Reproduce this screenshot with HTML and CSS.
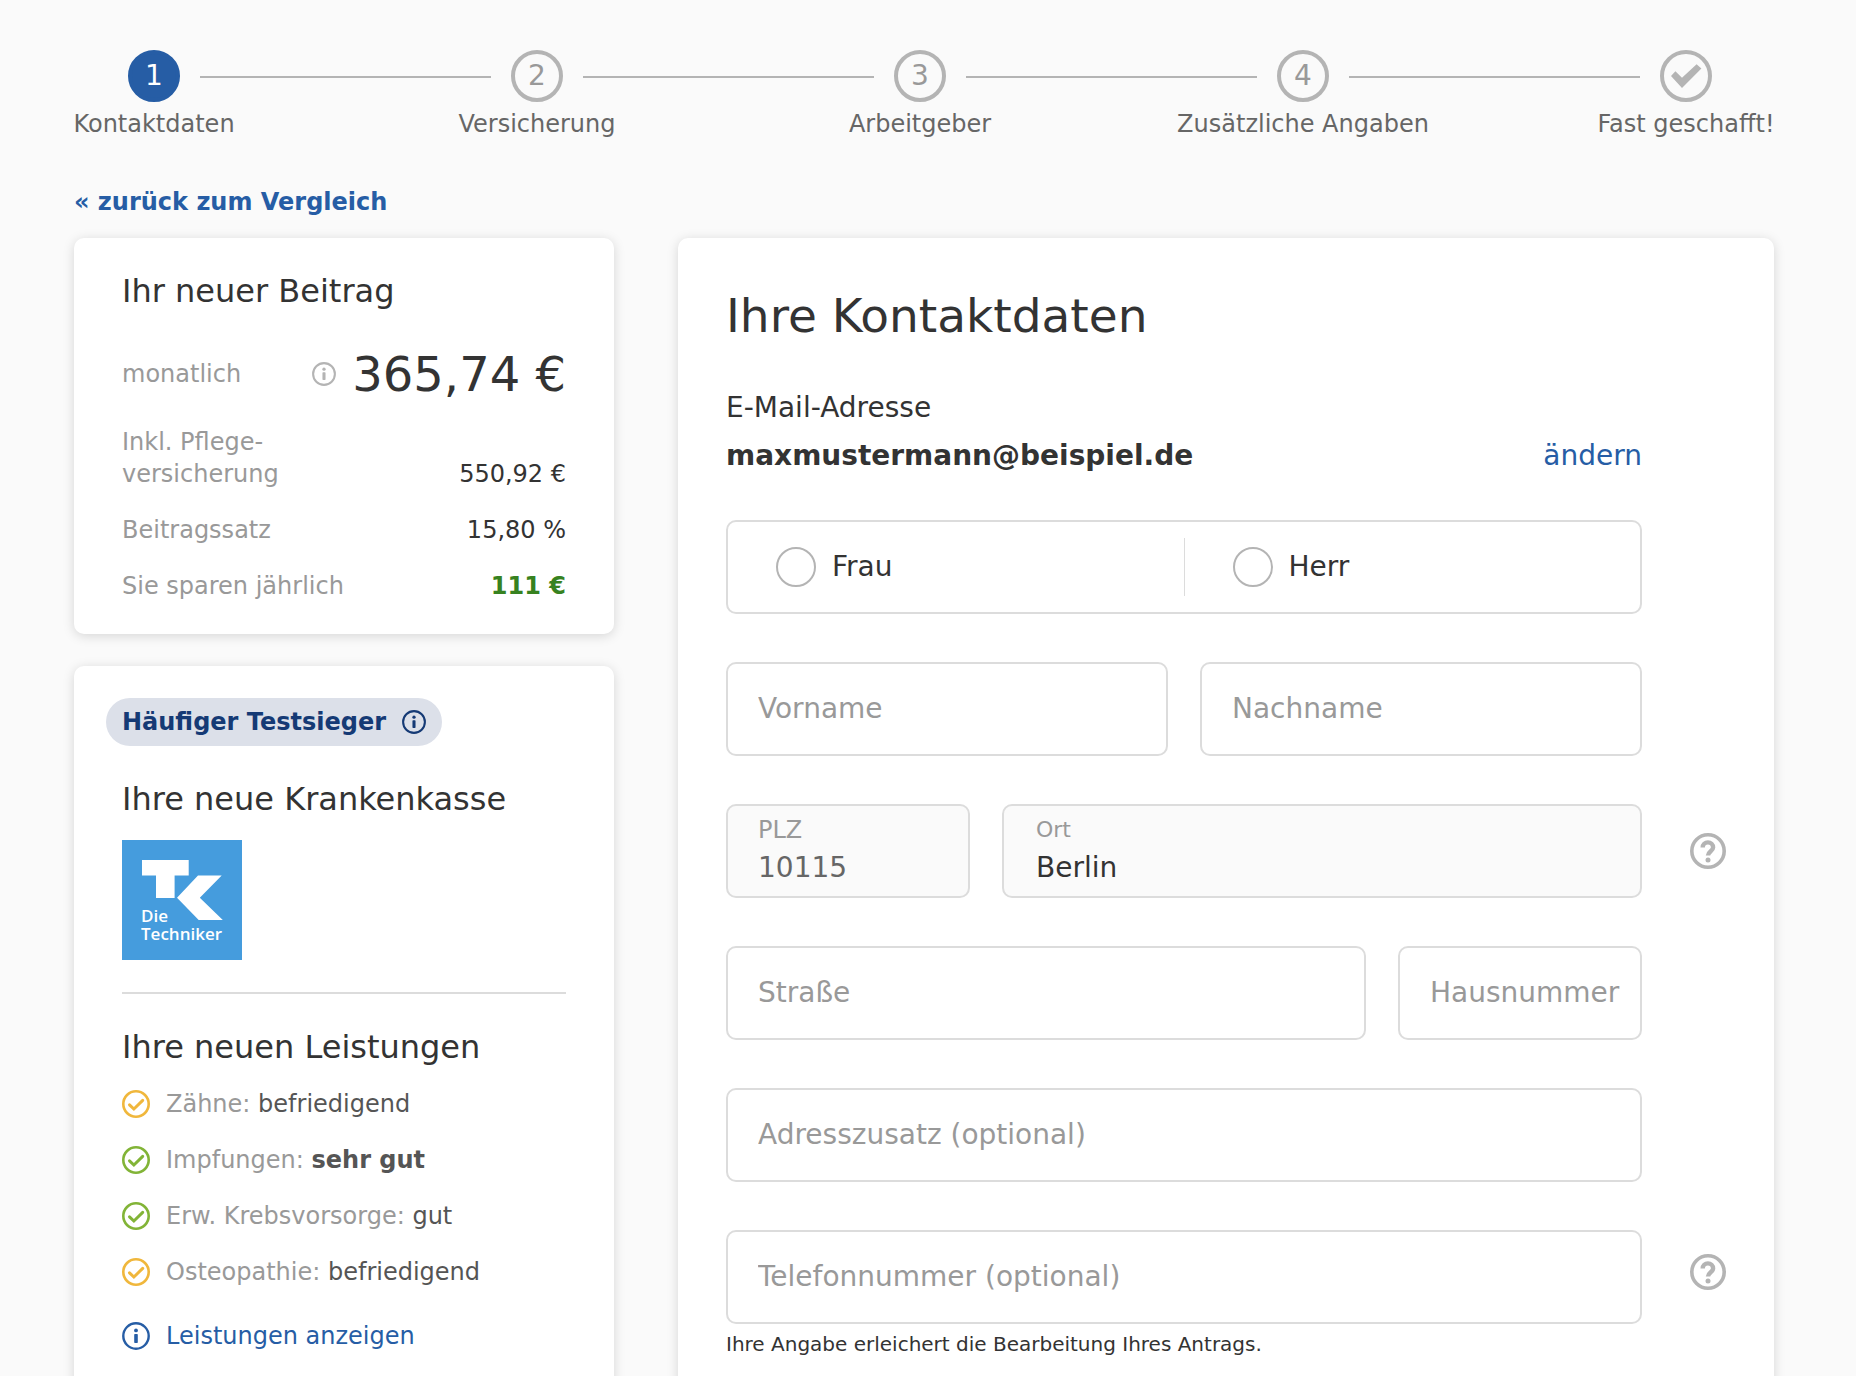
FILE: index.html
```html
<!DOCTYPE html>
<html lang="de">
<head>
<meta charset="utf-8">
<meta name="viewport" content="width=device-width, initial-scale=1">
<title>Ihre Kontaktdaten</title>
<link rel="stylesheet" href="styles.css">
</head>
<body>
<svg class="sprite" aria-hidden="true">
  <symbol id="icon-info" viewBox="0 0 28 28">
    <circle cx="14" cy="14" r="12.7" fill="none" stroke="currentColor" stroke-width="2.4"/>
    <circle cx="14" cy="8.4" r="1.9" fill="currentColor"/>
    <rect x="12.2" y="12" width="3.6" height="9" rx=".8" fill="currentColor"/>
  </symbol>
  <symbol id="icon-check" viewBox="0 0 28 28">
    <circle cx="14" cy="14" r="12.7" fill="none" stroke="currentColor" stroke-width="2.6"/>
    <path d="M7.5 14.8l4.4 4.2 8.8-8.6" fill="none" stroke="currentColor" stroke-width="3" stroke-linecap="round"/>
  </symbol>
  <symbol id="icon-help" viewBox="0 0 36 36">
    <circle cx="18" cy="18" r="16.2" fill="none" stroke="currentColor" stroke-width="3.6"/>
    <path d="M12.7 14.6a5.2 5.2 0 0 1 10.4 0c0 3.6-5.1 3.8-5.1 8" fill="none" stroke="currentColor" stroke-width="4.4"/>
    <circle cx="18" cy="27" r="2.5" fill="currentColor"/>
  </symbol>
</svg>

<div class="page">
  <ol class="steps">
    <li class="step step--active"><span class="step__dot">1</span><span class="step__label">Kontaktdaten</span></li>
    <li class="steps__line" aria-hidden="true"></li>
    <li class="step"><span class="step__dot">2</span><span class="step__label">Versicherung</span></li>
    <li class="steps__line" aria-hidden="true"></li>
    <li class="step"><span class="step__dot">3</span><span class="step__label">Arbeitgeber</span></li>
    <li class="steps__line" aria-hidden="true"></li>
    <li class="step"><span class="step__dot">4</span><span class="step__label">Zusätzliche Angaben</span></li>
    <li class="steps__line" aria-hidden="true"></li>
    <li class="step">
      <span class="step__dot">
        <svg class="step__check" viewBox="-22 -22 44 44" aria-hidden="true"><path d="M-15 0l4.400-4.800 6.600 6.600L10.600-11.800l4.800 4.400L-4 12z" fill="currentColor"/></svg>
      </span>
      <span class="step__label">Fast geschafft!</span>
    </li>
  </ol>

  <a class="back" href="#">« zurück zum Vergleich</a>

  <div class="columns">
    <aside class="sidebar">
      <section class="card price">
        <h2 class="card__title">Ihr neuer Beitrag</h2>
        <dl class="rates">
          <div class="rates__row rates__row--main">
            <dt>monatlich</dt>
            <dd>
              <button class="info info--muted" type="button" aria-label="Information zum Beitrag"><svg class="icon-s"><use href="#icon-info"/></svg></button>
              365,74 €
            </dd>
          </div>
          <div class="rates__row"><dt>Inkl. Pflege-<br>versicherung</dt><dd>550,92 €</dd></div>
          <div class="rates__row"><dt>Beitragssatz</dt><dd>15,80 %</dd></div>
          <div class="rates__row"><dt>Sie sparen jährlich</dt><dd class="saving">111 €</dd></div>
        </dl>
      </section>

      <section class="card insurer">
        <div class="badge">
          Häufiger Testsieger
          <button class="info" type="button" aria-label="Information zum Testsieger"><svg class="icon-s"><use href="#icon-info"/></svg></button>
        </div>
        <h2 class="card__title">Ihre neue Krankenkasse</h2>
        <svg class="logo" viewBox="0 0 120 120" role="img" aria-label="Die Techniker">
          <rect width="120" height="120" fill="#459cdd"/>
          <path d="M20 20h46.700v15.600H52.600V58H34V35.600H20zM76 35.400h23.700L77.800 57.800 100.800 80H76.700L55 57.800z" fill="#fff"/>
          <text class="logo__text"><tspan x="19" y="82">Die</tspan><tspan x="19" y="100">Techniker</tspan></text>
        </svg>
        <hr class="rule">
        <h2 class="card__title">Ihre neuen Leistungen</h2>
        <ul class="benefits">
          <li class="benefit"><svg class="icon-m icon--fair"><use href="#icon-check"/></svg><span>Zähne: <span class="grade">befriedigend</span></span></li>
          <li class="benefit"><svg class="icon-m icon--good"><use href="#icon-check"/></svg><span>Impfungen: <strong class="grade">sehr gut</strong></span></li>
          <li class="benefit"><svg class="icon-m icon--good"><use href="#icon-check"/></svg><span>Erw. Krebsvorsorge: <span class="grade">gut</span></span></li>
          <li class="benefit"><svg class="icon-m icon--fair"><use href="#icon-check"/></svg><span>Osteopathie: <span class="grade">befriedigend</span></span></li>
        </ul>
        <a class="benefit benefit--link" href="#"><svg class="icon-m"><use href="#icon-info"/></svg>Leistungen anzeigen</a>
      </section>
    </aside>

    <main class="card contact">
      <h1 class="contact__title">Ihre Kontaktdaten</h1>
      <form class="form">
        <div class="email">
          <span>E-Mail-Adresse</span>
          <div class="email__row">
            <strong>maxmustermann@beispiel.de</strong>
            <a class="link" href="#">ändern</a>
          </div>
        </div>

        <div class="choice" role="radiogroup" aria-label="Anrede">
          <label class="option"><input class="option__radio" type="radio" name="anrede" value="frau">Frau</label>
          <label class="option"><input class="option__radio" type="radio" name="anrede" value="herr">Herr</label>
        </div>

        <div class="row">
          <input class="input" type="text" placeholder="Vorname" aria-label="Vorname">
          <input class="input" type="text" placeholder="Nachname" aria-label="Nachname">
        </div>

        <div class="row">
          <div class="filled filled--short">
            <label class="filled__label" for="plz">PLZ</label>
            <input class="filled__input" id="plz" type="text" value="10115">
          </div>
          <div class="filled filled--city">
            <label class="filled__label" for="ort">Ort</label>
            <input class="filled__input" id="ort" type="text" value="Berlin" readonly>
          </div>
        </div>
        <button class="help" type="button" aria-label="Hilfe zu PLZ und Ort"><svg class="icon-l"><use href="#icon-help"/></svg></button>

        <div class="row">
          <input class="input" type="text" placeholder="Straße" aria-label="Straße">
          <input class="input input--short" type="text" placeholder="Hausnummer" aria-label="Hausnummer">
        </div>

        <div class="row">
          <input class="input" type="text" placeholder="Adresszusatz (optional)" aria-label="Adresszusatz (optional)">
        </div>

        <div class="phone">
          <input class="input" type="tel" placeholder="Telefonnummer (optional)" aria-label="Telefonnummer (optional)" aria-describedby="phone-hint">
          <p class="hint" id="phone-hint">Ihre Angabe erleichert die Bearbeitung Ihres Antrags.</p>
        </div>
        <button class="help help--top" type="button" aria-label="Hilfe zur Telefonnummer"><svg class="icon-l"><use href="#icon-help"/></svg></button>
      </form>
    </main>
  </div>
</div>
</body>
</html>
```
FILE: styles.css
```css
:root {
  --blue: #265da5;
  --navy: #153a75;
  --text: #333;
  --muted: #999;
  --line: #dcdcdc;
  --grey: #b4b4b4;
}

* {
  box-sizing: border-box;
}

body {
  margin: 0;
  background: #fafafa;
  color: var(--text);
  font: 24px/28px Verdana, "DejaVu Sans", sans-serif;
}

h1, h2, p, ol, ul, dl, dd {
  margin: 0;
  padding: 0;
  font-weight: normal;
}

ol, ul {
  list-style: none;
}

button {
  display: flex;
  padding: 0;
  border: 0;
  background: none;
  color: inherit;
  cursor: pointer;
}

input {
  font: inherit;
}

a {
  color: var(--blue);
  text-decoration: none;
}

.sprite {
  display: none;
}

.icon-s {
  width: 24px;
  height: 24px;
}

.icon-m {
  width: 28px;
  height: 28px;
}

.icon-l {
  width: 36px;
  height: 36px;
}

.icon--fair {
  color: #f0b73c;
}

.icon--good {
  color: #82b437;
}

.page {
  padding: 50px 82px 48px 74px;
}

/* progress */

.steps {
  display: flex;
  padding: 0 62px 0 54px;
}

.step {
  display: flex;
  flex: none;
  flex-direction: column;
  align-items: center;
  gap: 8px;
  width: 52px;
}

.step__dot {
  display: flex;
  align-items: center;
  justify-content: center;
  width: 52px;
  height: 52px;
  border: 4px solid var(--grey);
  border-radius: 50%;
  color: var(--muted);
  font-size: 28px;
}

.step--active .step__dot {
  border-color: var(--blue);
  background: var(--blue);
  color: #fff;
}

.step__check {
  width: 44px;
  height: 44px;
  color: var(--grey);
}

.step__label {
  color: #666;
  white-space: nowrap;
}

.steps__line {
  flex: 1;
  height: 2px;
  margin: 26px 20px 0;
  background: var(--grey);
}

.back {
  display: inline-block;
  margin: 50px 0 22px;
  font-weight: bold;
}

/* layout */

.columns {
  display: grid;
  grid-template-columns: 540px 1fr;
  gap: 64px;
}

.sidebar {
  display: flex;
  flex-direction: column;
  gap: 32px;
}

.card {
  border-radius: 10px;
  background: #fff;
  box-shadow: 0 2px 12px rgba(0, 0, 0, .15);
}

.card__title {
  font-size: 32px;
  line-height: 38px;
}

/* price */

.price {
  padding: 34px 48px 32px;
}

.rates {
  display: flex;
  flex-direction: column;
  gap: 24px;
  margin-top: 36px;
  line-height: 32px;
}

.rates__row {
  display: flex;
  align-items: flex-end;
  justify-content: space-between;
  color: var(--muted);
}

.rates__row dd {
  color: var(--text);
}

.rates__row--main {
  align-items: center;
}

.rates__row--main dd {
  display: flex;
  align-items: center;
  gap: 16px;
  font-size: 48px;
  line-height: 56px;
}

.rates__row .saving {
  color: #378220;
  font-weight: bold;
}

.info--muted {
  color: var(--grey);
}

/* insurer */

.insurer {
  flex: 1;
  padding: 32px 48px 48px;
}

.badge {
  display: flex;
  align-items: center;
  gap: 16px;
  width: max-content;
  height: 48px;
  margin: 0 0 34px -16px;
  padding: 0 16px;
  border-radius: 24px;
  background: #dce0e9;
  color: var(--navy);
  font-weight: bold;
}

.logo {
  display: block;
  width: 120px;
  height: 120px;
  margin-top: 22px;
}

.logo__text {
  fill: #fff;
  font: 600 17px "Open Sans", sans-serif;
}

.rule {
  height: 2px;
  margin: 32px 0 34px;
  border: 0;
  background: var(--line);
}

.benefits {
  display: flex;
  flex-direction: column;
  gap: 28px;
  margin: 24px 0 36px;
}

.benefit {
  display: flex;
  align-items: center;
  gap: 16px;
  color: var(--muted);
}

.benefit--link {
  color: var(--blue);
}

.grade {
  color: #555;
}

/* contact form */

.contact {
  padding: 50px 0 48px 48px;
  font-size: 28px;
  line-height: 32px;
}

.contact__title {
  font-size: 47px;
  line-height: 56px;
}

.form {
  display: grid;
  grid-template-columns: 1fr 132px;
  row-gap: 48px;
  margin-top: 48px;
}

.email,
.choice,
.row,
.phone {
  grid-column: 1;
}

.email {
  display: flex;
  flex-direction: column;
  gap: 16px;
}

.email__row {
  display: flex;
  justify-content: space-between;
}

.choice {
  display: flex;
  height: 94px;
  padding: 16px 0;
  border: 2px solid var(--line);
  border-radius: 10px;
}

.option {
  display: flex;
  flex: 1;
  align-items: center;
  gap: 16px;
  padding-left: 48px;
}

.option:first-child {
  border-right: 1px solid var(--line);
}

.option__radio {
  width: 40px;
  height: 40px;
  margin: 0;
  border: 2px solid var(--grey);
  border-radius: 50%;
  appearance: none;
}

.option__radio:checked {
  border: 12px solid var(--blue);
}

.row {
  display: flex;
  gap: 32px;
}

.input {
  flex: 1;
  width: 100%;
  min-width: 0;
  height: 94px;
  padding: 0 16px 2px 30px;
  border: 2px solid var(--line);
  border-radius: 10px;
  background: #fff;
  color: var(--text);
}

.input::placeholder {
  color: var(--muted);
  opacity: 1;
}

.input--short,
.filled--short {
  flex: 0 0 244px;
}

.filled {
  display: flex;
  flex-direction: column;
  gap: 6px;
  height: 94px;
  padding: 8px 16px 0 30px;
  border: 2px solid var(--line);
  border-radius: 10px;
  background: #fafafa;
}

.filled__label {
  color: var(--muted);
  font-size: 24px;
}

.filled__input {
  width: 100%;
  height: 32px;
  padding: 0;
  border: 0;
  background: none;
  color: #666;
}

.filled--city {
  flex: 1;
  padding-left: 32px;
}

.filled--city .filled__label {
  font-size: 22px;
}

.filled--city .filled__input {
  color: var(--text);
}

.help {
  grid-column: 2;
  place-self: center;
  color: var(--grey);
}

.help--top {
  align-self: start;
  margin-top: 24px;
}

.phone .input {
  display: block;
}

.hint {
  margin-top: 8px;
  font-size: 20px;
  line-height: 24px;
}
```
